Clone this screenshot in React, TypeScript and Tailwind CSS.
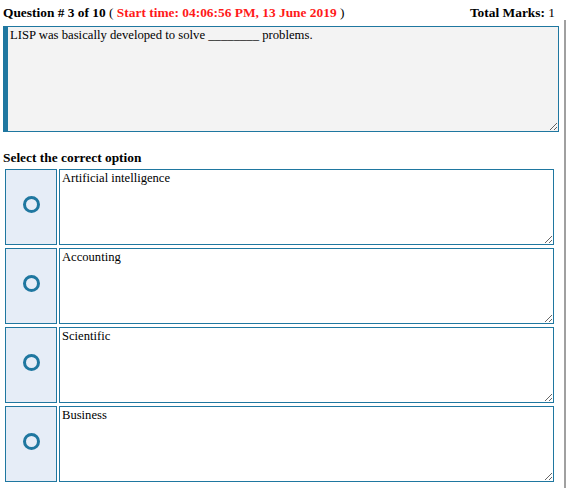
import React from "react";

const options = ["Artificial intelligence", "Accounting", "Scientific", "Business"];

export default function App() {
  return (
    <div className="relative w-[566px] h-[488px] bg-white text-black font-['Liberation_Serif',serif]">
      <div className="absolute right-0 top-[20px] bottom-0 w-[2px] bg-[#a0a0a0]" />
      <div className="flex justify-between items-center h-[26px] pl-[3px] pr-[11px] text-[13.4px] font-bold">
        <div>
          Question # 3 of 10 <span className="font-normal">(</span>{" "}
          <span className="text-[#ff1a1a]">Start time: 04:06:56 PM, 13 June 2019</span>{" "}
          <span className="font-normal">)</span>
        </div>
        <div>
          Total Marks: <span className="font-normal">1</span>
        </div>
      </div>
      <textarea
        readOnly
        defaultValue="LISP was basically developed to solve ________ problems."
        className="block ml-[3px] w-[556px] h-[106px] border border-[#1f77a0] border-l-[5px] bg-[#f3f3f3] text-[12.7px] leading-[15px] px-[2px] py-[1px] outline-none resize"
      />
      <div className="mt-[18px] pl-[3px] text-[13.4px] font-bold leading-[16px]">Select the correct option</div>
      <div className="mt-[3px] flex flex-col gap-[3px] pl-[5px]">
        {options.map((o) => (
          <div key={o} className="flex gap-[2px] h-[76px]">
            <div className="w-[52px] h-full pb-[5px] bg-[#e6edf7] border border-[#1f77a0] flex items-center justify-center">
              <span className="block w-[17px] h-[17px] rounded-full border-[3.5px] border-[#1f77a0]" />
            </div>
            <textarea
              readOnly
              defaultValue={o}
              className="block w-[495px] h-full border border-[#1f77a0] bg-white text-[12.6px] leading-[15px] px-[2px] py-[1px] outline-none resize"
            />
          </div>
        ))}
      </div>
    </div>
  );
}
